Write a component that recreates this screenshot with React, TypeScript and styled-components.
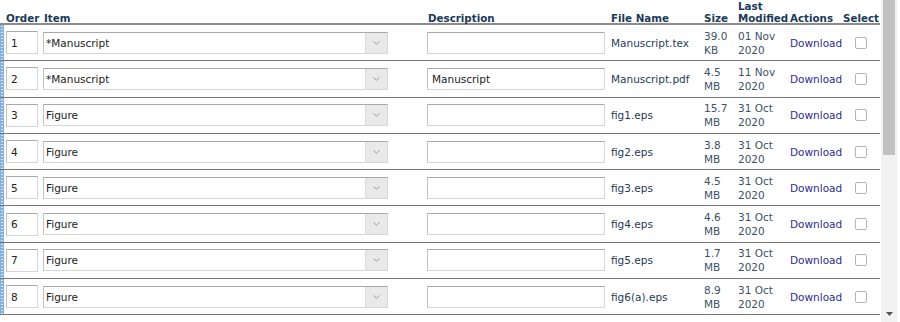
import React from "react";
import styled, { createGlobalStyle } from "styled-components";

const GlobalStyle = createGlobalStyle`
  html, body {
    margin: 0;
    padding: 0;
    background: #ffffff;
    font-family: "DejaVu Sans", Verdana, sans-serif;
  }
`;

type FileRow = {
  order: number;
  item: string;
  description: string;
  fileName: string;
  size: [string, string];
  date: [string, string];
};

const rows: FileRow[] = [
  { order: 1, item: "*Manuscript", description: "", fileName: "Manuscript.tex", size: ["39.0", "KB"], date: ["01 Nov", "2020"] },
  { order: 2, item: "*Manuscript", description: "Manuscript", fileName: "Manuscript.pdf", size: ["4.5", "MB"], date: ["11 Nov", "2020"] },
  { order: 3, item: "Figure", description: "", fileName: "fig1.eps", size: ["15.7", "MB"], date: ["31 Oct", "2020"] },
  { order: 4, item: "Figure", description: "", fileName: "fig2.eps", size: ["3.8", "MB"], date: ["31 Oct", "2020"] },
  { order: 5, item: "Figure", description: "", fileName: "fig3.eps", size: ["4.5", "MB"], date: ["31 Oct", "2020"] },
  { order: 6, item: "Figure", description: "", fileName: "fig4.eps", size: ["4.6", "MB"], date: ["31 Oct", "2020"] },
  { order: 7, item: "Figure", description: "", fileName: "fig5.eps", size: ["1.7", "MB"], date: ["31 Oct", "2020"] },
  { order: 8, item: "Figure", description: "", fileName: "fig6(a).eps", size: ["8.9", "MB"], date: ["31 Oct", "2020"] },
];

const COLUMNS = "42px 383px 183px 93px 34px 53px 53px 39px";

function App() {
  return (
    <>
      <GlobalStyle />
      <Page>
        <Table>
          <HeaderRow>
            <HeadCell $pad={6}>Order</HeadCell>
            <HeadCell $pad={2}>Item</HeadCell>
            <HeadCell $pad={3}>Description</HeadCell>
            <HeadCell $pad={3}>File Name</HeadCell>
            <HeadCell $pad={3}>Size</HeadCell>
            <HeadCell $pad={3}>
              Last
              <br />
              Modified
            </HeadCell>
            <HeadCell $pad={2}>Actions</HeadCell>
            <HeadCell $pad={2}>Select</HeadCell>
          </HeaderRow>
          {rows.map((r) => (
            <Row key={r.order}>
              <OrderCell>
                <Handle />
                <OrderInput defaultValue={String(r.order)} />
              </OrderCell>
              <Cell $pad={1}>
                <Select>
                  <SelectText>{r.item}</SelectText>
                  <SelectArrow>
                    <svg width="7" height="4" viewBox="0 0 7 4">
                      <path d="M0.5 0.5 L3.5 3.2 L6.5 0.5" fill="none" stroke="#9a9a9a" strokeWidth="1" />
                    </svg>
                  </SelectArrow>
                </Select>
              </Cell>
              <Cell $pad={2}>
                <DescInput defaultValue={r.description} />
              </Cell>
              <Cell $pad={3}>
                <FileName>{r.fileName}</FileName>
              </Cell>
              <Cell $pad={3}>
                <Stack>
                  <span>{r.size[0]}</span>
                  <span>{r.size[1]}</span>
                </Stack>
              </Cell>
              <Cell $pad={3}>
                <Stack>
                  <span>{r.date[0]}</span>
                  <span>{r.date[1]}</span>
                </Stack>
              </Cell>
              <Cell $pad={2}>
                <DownloadLink href="#">Download</DownloadLink>
              </Cell>
              <Cell $pad={14}>
                <CheckBox />
              </Cell>
            </Row>
          ))}
        </Table>
        <Scrollbar>
          <Thumb />
          <TrackFill />
          <ArrowDown>
            <svg width="7" height="4" viewBox="0 0 7 4">
              <path d="M0 0 L7 0 L3.5 4 Z" fill="#505050" />
            </svg>
          </ArrowDown>
        </Scrollbar>
      </Page>
    </>
  );
}

export default App;

const Page = styled.div`
  display: flex;
  width: 900px;
  height: 322px;
  overflow: hidden;
`;

const Table = styled.div`
  width: 880px;
  flex: none;
  display: flex;
  flex-direction: column;
`;

const HeaderRow = styled.div`
  display: grid;
  grid-template-columns: ${COLUMNS};
  height: 23px;
  border-bottom: 2px solid #8c8c8c;
  box-sizing: content-box;
`;

const HeadCell = styled.div<{ $pad: number }>`
  display: flex;
  flex-direction: column;
  justify-content: flex-end;
  padding-left: ${(p) => p.$pad}px;
  padding-bottom: 1px;
  font-size: 10.3px;
  font-weight: bold;
  line-height: 12px;
  color: #1c3a5a;
  white-space: nowrap;
`;

const Row = styled.div`
  display: grid;
  grid-template-columns: ${COLUMNS};
  height: 35.3px;
  border-bottom: 1px solid #767676;
  box-sizing: content-box;
`;

const Cell = styled.div<{ $pad: number }>`
  display: flex;
  align-items: center;
  padding-left: ${(p) => p.$pad}px;
  font-size: 10.5px;
  color: #3b4d60;
  white-space: nowrap;
`;

const OrderCell = styled.div`
  display: flex;
  align-items: center;
  gap: 2px;
`;

const Handle = styled.div`
  align-self: stretch;
  width: 4px;
  background-color: #86afdc;
  background-image: radial-gradient(circle, #dbe9f7 0.8px, transparent 1px);
  background-size: 4px 3px;
  background-position: 0 0;
`;

const inputBase = `
  box-sizing: border-box;
  height: 23px;
  border: 1px solid #d6d6d6;
  border-top-color: #a9a9a9;
  border-left-color: #c2c2c2;
  background: #ffffff;
  font-family: "DejaVu Sans", Verdana, sans-serif;
  font-size: 10.5px;
  color: #222222;
  padding: 0 0 0 4px;
  outline: none;
`;

const OrderInput = styled.input`
  ${inputBase}
  width: 32px;
`;

const DescInput = styled.input`
  ${inputBase}
  width: 178px;
  height: 22px;
`;

const Select = styled.div`
  box-sizing: border-box;
  width: 345px;
  height: 22px;
  display: flex;
  align-items: stretch;
  border: 1px solid #d6d6d6;
  border-top-color: #a9a9a9;
  border-left-color: #c2c2c2;
  background: #ffffff;
`;

const SelectText = styled.div`
  flex: 1;
  display: flex;
  align-items: center;
  padding-left: 2px;
  font-size: 10.5px;
  color: #222222;
`;

const SelectArrow = styled.div`
  width: 21px;
  display: flex;
  align-items: center;
  justify-content: center;
  background: #e9e9e9;
  border-left: 1px solid #dcdcdc;
`;

const FileName = styled.span`
  color: #1f3a58;
`;

const Stack = styled.div`
  display: flex;
  flex-direction: column;
  line-height: 14px;
  color: #3d5166;
`;

const DownloadLink = styled.a`
  color: #2d2d8e;
  text-decoration: none;
  font-size: 10.5px;
`;

const CheckBox = styled.div`
  box-sizing: border-box;
  width: 12px;
  height: 12px;
  border: 1px solid #b4b4b4;
  border-radius: 2px;
  background: #ffffff;
`;

const Scrollbar = styled.div`
  width: 16px;
  margin-left: 1px;
  display: flex;
  flex-direction: column;
  background: #f1f1f1;
`;

const Thumb = styled.div`
  height: 155px;
  margin: 0 2px;
  background: #c1c1c1;
`;

const TrackFill = styled.div`
  flex: 1;
`;

const ArrowDown = styled.div`
  height: 12px;
  display: flex;
  align-items: center;
  justify-content: center;
  padding-bottom: 2px;
`;
